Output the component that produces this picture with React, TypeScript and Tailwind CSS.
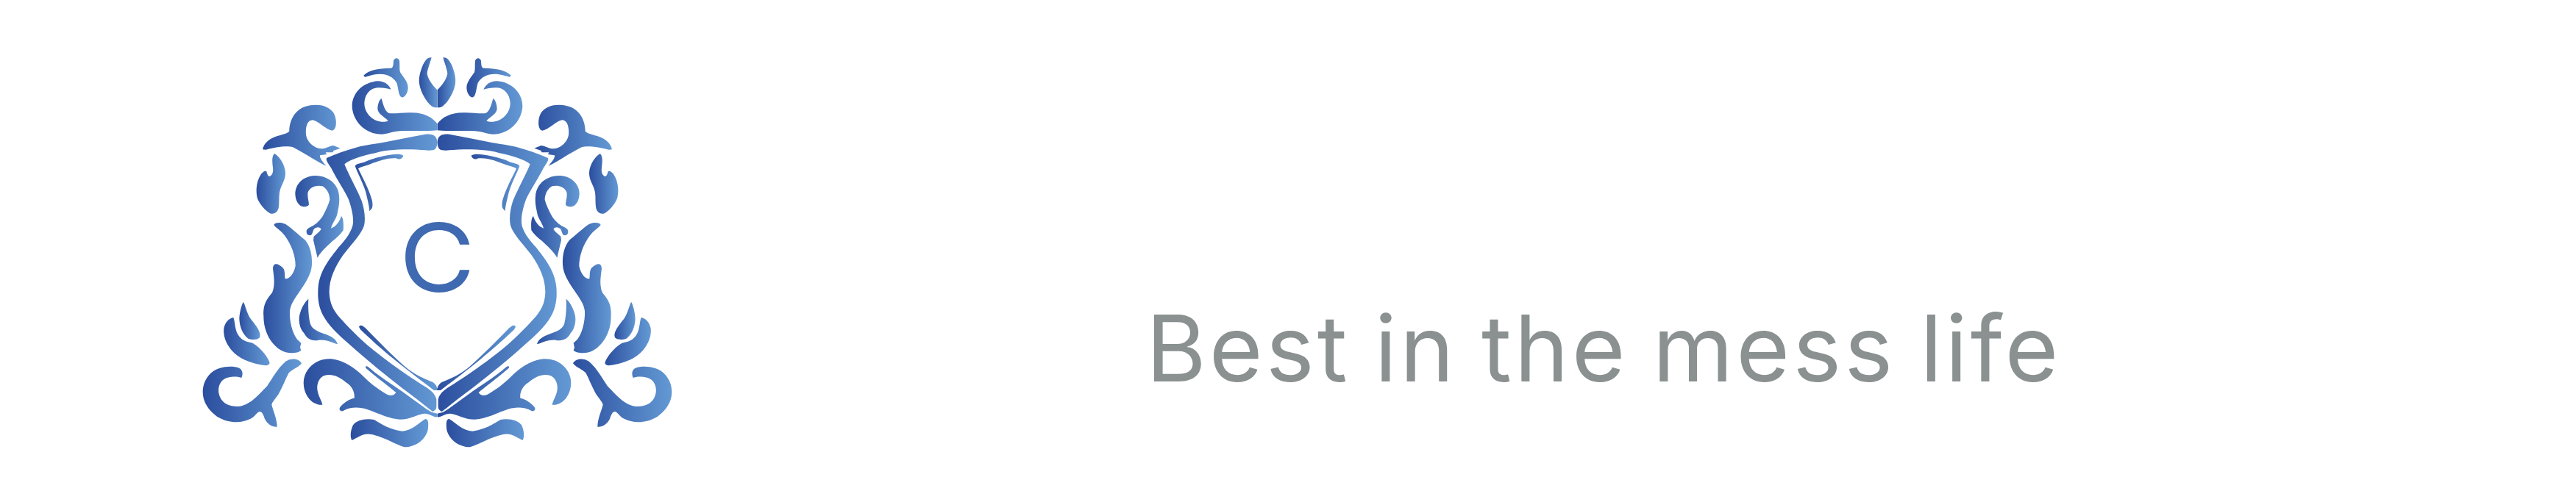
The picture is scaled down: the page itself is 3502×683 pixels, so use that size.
const shapes = [
  // top sprout
  "M703,98 C720,78 760,68 815,68 C825,66 824,50 825,38 C828,24 846,24 849,38 C851,55 848,70 852,85 C865,105 885,125 884,150 C882,175 868,190 858,187 C845,180 845,150 838,128 C825,105 800,92 770,92 C745,92 725,100 708,104 Z",
  // crown curl
  "M815,155 C805,135 790,122 760,121 C700,125 655,170 656,225 C660,290 715,338 775,338 C800,338 815,328 850,325 C890,322 940,327 1003,322 L1003,295 C985,270 950,250 900,250 C870,247 830,256 806,252 C790,245 782,215 776,192 C768,195 760,215 760,235 C762,255 785,265 803,283 C790,290 770,288 755,282 C725,270 705,240 706,210 C708,175 730,150 760,148 C780,147 800,152 815,155 Z",
  // centre leaf
  "M980,25 C965,22 955,35 945,55 C935,80 927,105 930,130 C935,170 965,215 985,226 C990,229 997,229 1003,229 L1003,157 C990,145 965,115 962,90 C964,70 975,45 980,25 Z",
  // shield band
  "M1003,370 C1003,345 985,334 955,338 C900,348 850,358 800,368 C750,378 705,382 670,393 C630,405 590,418 552,435 C548,445 560,458 570,475 C590,515 620,560 640,600 C652,630 662,670 660,700 C658,730 630,770 600,800 C570,840 525,890 518,960 C514,1010 520,1050 545,1090 C570,1130 610,1165 650,1200 C700,1245 760,1295 830,1350 C880,1390 930,1425 965,1455 L985,1470 C995,1465 1000,1460 1000,1450 L1000,1420 C995,1400 980,1385 960,1372 C900,1335 810,1275 720,1200 C680,1165 635,1120 600,1080 C580,1055 565,1030 563,985 C562,930 585,880 620,830 C650,790 695,745 705,710 C712,680 705,640 695,610 C675,560 640,500 625,460 C650,440 700,425 750,415 C800,400 850,400 900,400 C940,400 980,410 995,398 C1002,390 1003,380 1003,370 Z",
  // inner stripe, top
  "M865,425 C862,438 848,444 836,436 C800,432 760,448 725,462 C710,467 695,470 681,478 C695,510 722,555 735,600 C741,615 740,635 737,640 L727,652 C725,625 720,610 712,575 C700,535 680,500 668,468 C672,458 690,456 705,452 C730,440 760,432 800,424 C825,420 850,415 865,425 Z",
  // inner stripe, bottom
  "M684,1124 C690,1112 700,1120 712,1130 C760,1180 820,1240 870,1285 C910,1320 950,1335 985,1350 C998,1358 1003,1370 1005,1383 L990,1383 C960,1360 900,1315 850,1275 C800,1235 730,1175 690,1135 Z",
  // shoulder flourish
  "M291,400 C295,375 320,355 345,347 C370,340 395,335 400,325 C400,285 420,240 465,225 C505,212 555,215 580,250 C595,275 595,320 575,323 C550,320 520,285 495,280 C475,280 465,305 468,340 C472,370 500,395 530,397 C550,397 565,385 580,384 L608,395 L580,405 L578,412 L548,412 L552,420 L525,424 C522,435 540,455 550,467 C520,455 480,425 415,391 C390,383 340,392 305,401 Z",
  // flame beside shoulder
  "M340,417 C355,425 383,460 384,495 C384,530 365,545 360,575 C357,595 360,620 356,640 C352,655 340,665 325,662 C305,655 280,625 270,600 C262,570 265,530 285,500 C292,492 302,485 307,490 C310,500 312,510 320,510 C332,505 335,490 333,475 C330,450 328,425 340,417 Z",
  // small curl by the shield
  "M455,633 C440,632 424,610 424,580 C425,535 465,505 510,507 C565,510 600,545 603,590 C606,620 600,640 595,665 C590,685 575,700 570,722 C590,715 605,695 612,672 C620,680 622,700 620,730 C610,745 595,760 575,775 C555,795 530,815 515,842 L498,770 L500,755 C510,745 525,735 530,725 C525,715 510,715 500,725 C495,735 495,745 488,750 C478,752 470,748 470,735 C470,725 480,720 490,715 C510,705 530,685 540,665 C550,645 560,625 565,605 C565,585 555,560 535,550 C515,545 490,550 478,570 C470,585 480,610 480,625 C478,632 465,635 455,633 Z",
  // middle flame
  "M337,708 C340,698 365,695 385,705 C410,722 445,755 465,770 C485,795 494,830 492,870 C490,910 465,945 445,975 C425,1005 405,1030 402,1060 C400,1100 412,1150 432,1175 L448,1190 L444,1208 L448,1220 C435,1232 395,1236 370,1222 C330,1200 295,1150 295,1080 C292,1030 310,1010 330,985 C345,950 335,910 333,885 C335,860 355,865 370,880 C385,890 380,915 383,928 C400,930 420,905 425,875 C425,835 410,790 380,750 C365,730 345,720 337,708 Z",
  // lower inner flame
  "M478,1010 C476,1040 478,1080 485,1110 C492,1135 520,1145 550,1155 C575,1165 592,1175 597,1195 C580,1192 555,1175 520,1178 C500,1182 475,1180 460,1150 C440,1130 435,1090 445,1065 C450,1045 465,1020 478,1010 Z",
  // small leaf
  "M212,1023 C220,1030 225,1070 245,1095 C265,1120 285,1145 280,1165 C275,1178 250,1178 232,1172 C210,1155 197,1125 196,1090 C197,1065 205,1035 212,1023 Z",
  // big leaf
  "M172,1086 C178,1100 178,1135 190,1155 C205,1180 225,1185 250,1190 C285,1210 315,1250 320,1272 C315,1285 300,1282 280,1278 C240,1270 195,1255 165,1220 C140,1190 130,1160 133,1130 C138,1105 155,1088 172,1086 Z",
  // bottom outer scroll
  "M195,1292 C210,1298 212,1318 205,1332 C190,1325 150,1325 130,1340 C112,1355 105,1385 118,1412 C130,1440 165,1452 200,1448 C245,1440 280,1395 310,1365 C330,1335 355,1290 385,1265 C405,1252 435,1250 450,1272 C445,1285 415,1295 398,1312 C385,1335 375,1365 355,1400 C345,1415 330,1430 328,1442 C335,1470 350,1500 350,1532 C335,1535 310,1522 300,1500 C295,1485 290,1470 278,1470 C265,1475 262,1490 240,1500 C205,1518 150,1518 105,1490 C70,1465 47,1430 47,1390 C47,1345 75,1305 115,1293 C145,1284 175,1285 195,1292 Z",
  // bottom inner scroll
  "M535,1442 C520,1445 490,1435 475,1410 C455,1380 450,1335 475,1300 C495,1270 530,1253 570,1255 C610,1258 650,1280 690,1315 C725,1350 755,1375 790,1395 C805,1405 825,1410 835,1392 C810,1370 760,1335 712,1292 C708,1285 715,1282 722,1288 C770,1330 830,1365 870,1395 L960,1460 L980,1472 L1003,1478 L1003,1492 C990,1495 975,1478 950,1478 C920,1482 895,1502 850,1502 C800,1498 760,1475 715,1460 C690,1452 650,1448 618,1468 C605,1470 600,1458 610,1448 C625,1432 645,1418 665,1415 C668,1390 655,1365 630,1350 C605,1328 575,1315 545,1322 C520,1330 510,1360 515,1385 C520,1410 532,1425 535,1442 Z",
  // bottom ribbon
  "M655,1587 C648,1575 648,1550 660,1525 C675,1505 710,1497 745,1503 C770,1515 795,1540 860,1550 C900,1548 930,1515 955,1500 C968,1500 968,1520 965,1545 C955,1585 915,1615 870,1615 C835,1605 790,1575 735,1563 C705,1555 680,1575 655,1587 Z",
];

function Crest() {
  return (
    <svg viewBox="0 0 2010 1800" className="w-[670px] h-[600px] shrink-0">
      <defs>
        <linearGradient id="crestLeft" x1="0" y1="0" x2="1" y2="0">
          <stop offset="0" stopColor="#2b4e9e" />
          <stop offset="1" stopColor="#6399d4" />
        </linearGradient>
        <linearGradient id="crestRight" x1="0" y1="0" x2="1" y2="0">
          <stop offset="0" stopColor="#6399d4" />
          <stop offset="1" stopColor="#2b4e9e" />
        </linearGradient>
      </defs>
      {shapes.map((d) => (
        <path key={d} d={d} fill="url(#crestLeft)" />
      ))}
      <g transform="translate(2007 0) scale(-1 1)">
        {shapes.map((d) => (
          <path key={d} d={d} fill="url(#crestRight)" />
        ))}
      </g>
      <text
        transform="translate(1003 980) scale(1.1 1)"
        textAnchor="middle"
        fontSize="385"
        fontWeight="400"
        fill="#3f69b0"
        fontFamily="Inter, sans-serif"
      >
        C
      </text>
    </svg>
  );
}

export default function App() {
  return (
    <div className="flex items-start w-full h-[683px] bg-white overflow-hidden">
      <div className="pl-[260px] pt-[70px]">
        <Crest />
      </div>
      <p className="ml-[628px] mt-[411px] whitespace-nowrap text-[125px] leading-none tracking-[4px] [word-spacing:-6px] font-normal text-[#8a9190] font-['Inter',sans-serif]">
        Best in the mess life
      </p>
    </div>
  );
}
